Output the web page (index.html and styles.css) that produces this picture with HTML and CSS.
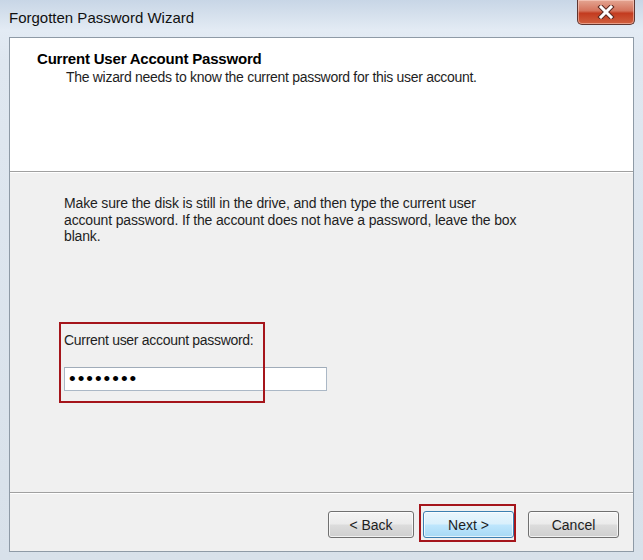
FILE: index.html
```html
<!DOCTYPE html>
<html lang="en">
<head>
    <meta charset="UTF-8">
    <title>Forgotten Password Wizard</title>
    <link rel="stylesheet" href="styles.css">
</head>
<body>
    <div class="window">
        <div class="titlebar">
            <span class="title">Forgotten Password Wizard</span>
            <button class="close-btn" type="button">
                <svg width="18" height="14" viewBox="0 0 18 14">
                    <path d="M4 2 L14 12 M14 2 L4 12" stroke="#5b2a22" stroke-width="5" stroke-linecap="square"/>
                    <path d="M4 2 L14 12 M14 2 L4 12" stroke="#ffffff" stroke-width="3" stroke-linecap="square"/>
                </svg>
            </button>
        </div>

        <div class="client">
            <div class="header">
                <h1>Current User Account Password</h1>
                <p>The wizard needs to know the current password for this user account.</p>
            </div>

            <div class="content">
                <p class="intro">Make sure the disk is still in the drive, and then type the current user account password. If the account does not have a password, leave the box blank.</p>

                <div class="field">
                    <label for="pwd">Current user account password:</label>
                    <input type="password" id="pwd" value="12345678">
                    <!-- annotation box around the field -->
                    <div class="mark mark-field"></div>
                </div>
            </div>

            <div class="footer">
                <button class="btn" type="button">&lt; Back</button>
                <div class="next-wrap">
                    <button class="btn btn-focus" type="button">Next &gt;</button>
                    <div class="mark mark-next"></div>
                </div>
                <button class="btn btn-cancel" type="button">Cancel</button>
            </div>
        </div>
    </div>
</body>
</html>
```

FILE: styles.css
```css
body {
    margin: 0;
    font-family: 'Liberation Sans', Arial, sans-serif;
    font-size: 14px;
    color: #1e1e1e;
    background-color: #dde6ef;
}
.window {
    width: 643px;
    height: 560px;
    display: flex;
    flex-direction: column;
    background: linear-gradient(to bottom, #c8d6e6 0px, #e3ebf4 30px, #dfe7f0 60px, #d8e1ea 100%);
    box-sizing: border-box;
}
.titlebar {
    height: 37px;
    display: flex;
    align-items: flex-start;
    padding-left: 9px;
    flex-shrink: 0;
}
.title {
    margin-top: 9px;
    font-size: 15px;
    color: #111;
}
.close-btn {
    margin-left: auto;
    margin-right: 8px;
    width: 58px;
    height: 25px;
    padding: 0;
    border: 1px solid #5e3530;
    border-top: none;
    border-radius: 0 0 5px 5px;
    background: linear-gradient(to bottom, #e4a592 0%, #d4735c 45%, #c33b1f 55%, #d0603f 100%);
    display: flex;
    align-items: center;
    justify-content: center;
    box-shadow: inset 0 0 0 1px rgba(255, 220, 210, 0.5);
}
.client {
    flex: 1;
    margin: 0 9px 8px 9px;
    border: 1px solid #8e9aa6;
    background-color: #f0f0f0;
    display: flex;
    flex-direction: column;
}
.header {
    height: 134px;
    background-color: #fff;
    border-bottom: 1px solid #a0a0a0;
    padding: 12px 0 0 27px;
    box-sizing: border-box;
}
.header h1 {
    margin: 0;
    font-size: 15px;
    font-weight: bold;
    color: #000;
    letter-spacing: -0.2px;
}
.header p {
    margin: 2px 0 0 29px;
    font-size: 14px;
    letter-spacing: -0.3px;
}
.content {
    flex: 1;
    padding: 22px 0 0 54px;
    border-top: 1px solid #fff;
}
.intro {
    margin: 0;
    width: 462px;
    line-height: 16.5px;
    letter-spacing: -0.15px;
}
.field {
    position: relative;
    margin-top: 87px;
    width: 263px;
}
.field label {
    display: block;
    line-height: 16px;
    letter-spacing: -0.3px;
}
.field input {
    display: block;
    margin-top: 19px;
    width: 263px;
    height: 24px;
    padding: 0 4px;
    box-sizing: border-box;
    border: 1px solid #abb8c6;
    border-top-color: #a0acb9;
    background-color: #fff;
    font-family: 'Liberation Sans', Arial, sans-serif;
    font-size: 19px;
    letter-spacing: 2px;
    color: #000;
}
.mark {
    position: absolute;
    border: 2px solid #a5151b;
    pointer-events: none;
}
.mark-field {
    left: -5px;
    top: -10px;
    width: 202px;
    height: 77px;
}
.footer {
    height: 59px;
    border-top: 1px solid #a0a0a0;
    box-shadow: inset 0 1px 0 #fff;
    display: flex;
    align-items: flex-start;
    padding: 18px 0 0 318px;
    box-sizing: border-box;
}
.btn {
    width: 86px;
    height: 27px;
    border: 1px solid #707070;
    border-radius: 3px;
    background: linear-gradient(to bottom, #f4f4f4 0%, #ebebeb 48%, #dcdcdc 52%, #cfcfcf 100%);
    font-family: 'Liberation Sans', Arial, sans-serif;
    font-size: 14px;
    color: #1e1e1e;
    padding: 0;
    box-shadow: inset 0 0 0 1px rgba(255, 255, 255, 0.7);
}
.next-wrap {
    position: relative;
    margin-left: 9px;
}
.btn-focus {
    width: 91px;
    border-color: #3c7fb1;
    background: linear-gradient(to bottom, #eaf6fd 0%, #d9f0fc 48%, #bee6fd 52%, #a7d9f5 100%);
}
.mark-next {
    left: -4px;
    top: -7px;
    width: 93px;
    height: 34px;
}
.btn-cancel {
    margin-left: 14px;
    width: 91px;
}
```
